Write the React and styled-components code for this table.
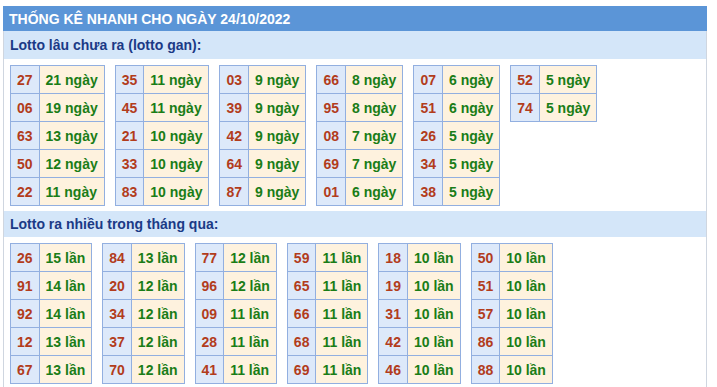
import React from "react";
import styled, { createGlobalStyle } from "styled-components";

const Global = createGlobalStyle`
  html, body { margin: 0; padding: 0; background: #ffffff; }
  body { font-family: "Liberation Sans", Arial, sans-serif; }
`;

const TopStrip = styled.div`
  height: 6px;
`;

const Box = styled.div`
  margin: 0 10px 0 3px;
  border-left: 1px solid #cfd6e0;
  border-right: 1px solid #cfd6e0;
`;

const Header = styled.div`
  height: 25px;
  display: flex;
  align-items: center;
  padding-left: 6px;
  margin: 0 -1px;
  background: #5b95d7;
  color: #ffffff;
  font-weight: bold;
  font-size: 14px;
`;

const SubHeader = styled.div`
  height: ${(p) => (p.$tall ? "28px" : "26px")};
  display: flex;
  align-items: center;
  padding-left: 6px;
  background: #d4e6f9;
  color: #1b3a86;
  font-weight: bold;
  font-size: 14px;
`;

const Tables = styled.div`
  display: flex;
  align-items: flex-start;
  gap: 10px;
  padding: 6px 6px 5px;
`;

const Table = styled.table`
  border-collapse: collapse;
  font-size: 14px;
  font-weight: bold;
`;

const NumCell = styled.td`
  height: 27px;
  padding: 0 6px;
  border: 1px solid #92afe0;
  background: #dde9fa;
  color: #b23c1c;
  text-align: center;
`;

const ValCell = styled.td`
  height: 27px;
  padding: 0 6px;
  border: 1px solid #92afe0;
  background: #fef2de;
  color: #1a7d17;
  text-align: left;
  white-space: nowrap;
`;

const gan = [
  [["27", 21], ["06", 19], ["63", 13], ["50", 12], ["22", 11]],
  [["35", 11], ["45", 11], ["21", 10], ["33", 10], ["83", 10]],
  [["03", 9], ["39", 9], ["42", 9], ["64", 9], ["87", 9]],
  [["66", 8], ["95", 8], ["08", 7], ["69", 7], ["01", 6]],
  [["07", 6], ["51", 6], ["26", 5], ["34", 5], ["38", 5]],
  [["52", 5], ["74", 5]],
];

const nhieu = [
  [["26", 15], ["91", 14], ["92", 14], ["12", 13], ["67", 13]],
  [["84", 13], ["20", 12], ["34", 12], ["37", 12], ["70", 12]],
  [["77", 12], ["96", 12], ["09", 11], ["28", 11], ["41", 11]],
  [["59", 11], ["65", 11], ["66", 11], ["68", 11], ["69", 11]],
  [["18", 10], ["19", 10], ["31", 10], ["42", 10], ["46", 10]],
  [["50", 10], ["51", 10], ["57", 10], ["86", 10], ["88", 10]],
];

function StatTable({ rows, unit }) {
  return (
    <Table>
      <tbody>
        {rows.map(([n, v]) => (
          <tr key={n}>
            <NumCell>{n}</NumCell>
            <ValCell>
              {v} {unit}
            </ValCell>
          </tr>
        ))}
      </tbody>
    </Table>
  );
}

export default function App() {
  return (
    <>
      <Global />
      <TopStrip />
      <Box>
        <Header>THỐNG KÊ NHANH CHO NGÀY 24/10/2022</Header>
        <SubHeader $tall>Lotto lâu chưa ra (lotto gan):</SubHeader>
        <Tables>
          {gan.map((rows, i) => (
            <StatTable key={i} rows={rows} unit="ngày" />
          ))}
        </Tables>
        <SubHeader>Lotto ra nhiều trong tháng qua:</SubHeader>
        <Tables>
          {nhieu.map((rows, i) => (
            <StatTable key={i} rows={rows} unit="lần" />
          ))}
        </Tables>
      </Box>
    </>
  );
}
